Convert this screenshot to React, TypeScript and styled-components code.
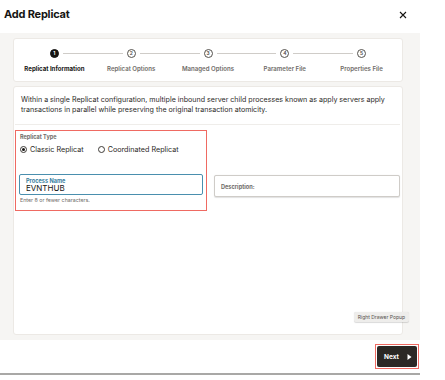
import React from 'react'
import styled, { createGlobalStyle } from 'styled-components'

const GlobalStyle = createGlobalStyle`
  html, body {
    margin: 0;
    padding: 0;
    background: #ffffff;
    font-family: Inter, "Noto Sans", sans-serif;
    color: #161513;
  }
`

const steps = [
  'Replicat Information',
  'Replicat Options',
  'Managed Options',
  'Parameter File',
  'Properties File',
]

export default function App() {
  return (
    <>
      <GlobalStyle />
      <Dialog>
        <Header>
          <Title>Add Replicat</Title>
          <Close aria-label="close">
            <svg width="8" height="8" viewBox="0 0 8 8">
              <path d="M1 1 L7 7 M7 1 L1 7" stroke="#161513" strokeWidth="1.1" />
            </svg>
          </Close>
        </Header>
        <Body>
          <Card>
            <Stepper>
              {steps.map((label, i) => (
                <Step key={label}>
                  <Track>
                    <Connector $hidden={i === 0} />
                    <Dot $active={i === 0}>{i + 1}</Dot>
                    <Connector $hidden={i === steps.length - 1} />
                  </Track>
                  <StepLabel $active={i === 0}>{label}</StepLabel>
                </Step>
              ))}
            </Stepper>
          </Card>
          <MainCard>
            <Intro>
              Within a single Replicat configuration, multiple inbound server child processes known as apply servers apply
              transactions in parallel while preserving the original transaction atomicity.
            </Intro>
            <Divider />
            <FormRow>
              <Highlight>
                <GroupLabel>Replicat Type</GroupLabel>
                <Radios>
                  <RadioOption>
                    <Radio $checked />
                    Classic Replicat
                  </RadioOption>
                  <RadioOption>
                    <Radio />
                    Coordinated Replicat
                  </RadioOption>
                </Radios>
                <Field $focused>
                  <FieldLabel $focused>Process Name</FieldLabel>
                  <FieldValue>EVNTHUB</FieldValue>
                </Field>
                <Hint>Enter 8 or fewer characters.</Hint>
              </Highlight>
              <SideField>
                <FieldLabel>Description:</FieldLabel>
              </SideField>
            </FormRow>
            <Tooltip>Right Drawer Popup</Tooltip>
          </MainCard>
        </Body>
        <Footer>
          <NextWrap>
            <NextButton>
              Next
              <svg width="5" height="6" viewBox="0 0 5 6">
                <path d="M0.5 0 L4.5 3 L0.5 6 Z" fill="#ffffff" />
              </svg>
            </NextButton>
          </NextWrap>
        </Footer>
      </Dialog>
    </>
  )
}

const Dialog = styled.div`
  width: 420px;
  height: 375px;
  display: flex;
  flex-direction: column;
  border-bottom: 2px solid #a9a8a6;
  box-sizing: border-box;
`

const Header = styled.div`
  height: 33px;
  display: flex;
  align-items: center;
  justify-content: space-between;
  padding: 0 12px 0 4px;
  box-sizing: border-box;
`

const Title = styled.h1`
  margin: 0;
  font-size: 11px;
  font-weight: 700;
  letter-spacing: -0.2px;
  margin-top: -6px;
`

const Close = styled.div`
  width: 10px;
  height: 10px;
  display: flex;
  align-items: center;
  justify-content: center;
  margin-top: -4px;
`

const Body = styled.div`
  background: #f6f5f3;
  padding: 5px 17px 5px 13px;
  display: flex;
  flex-direction: column;
  gap: 4px;
`

const Card = styled.div`
  background: #ffffff;
  border: 1px solid #ece9e5;
  border-radius: 3px;
  box-sizing: border-box;
`

const Stepper = styled.div`
  height: 42px;
  display: grid;
  grid-template-columns: repeat(5, 1fr);
  padding: 0 2px;
  align-content: center;
`

const Step = styled.div`
  display: flex;
  flex-direction: column;
  align-items: center;
  gap: 7px;
`

const Track = styled.div`
  width: 100%;
  display: flex;
  align-items: center;
  gap: 4px;
`

const Connector = styled.div<{ $hidden?: boolean }>`
  flex: 1;
  height: 1px;
  background: ${(p) => (p.$hidden ? 'transparent' : '#cfccc8')};
`

const Dot = styled.div<{ $active?: boolean }>`
  width: 9px;
  height: 9px;
  border-radius: 50%;
  box-sizing: border-box;
  border: 0.8px solid ${(p) => (p.$active ? '#161513' : '#55524e')};
  background: ${(p) => (p.$active ? '#161513' : '#ffffff')};
  color: ${(p) => (p.$active ? '#ffffff' : '#55524e')};
  font-size: 4.8px;
  font-weight: 700;
  display: flex;
  align-items: center;
  justify-content: center;
  line-height: 1;
`

const StepLabel = styled.div<{ $active?: boolean }>`
  font-size: 6.1px;
  font-weight: ${(p) => (p.$active ? 700 : 600)};
  color: ${(p) => (p.$active ? '#161513' : '#6f6c68')};
  white-space: nowrap;
`

const MainCard = styled(Card)`
  height: 249px;
  position: relative;
`

const Intro = styled.p`
  margin: 0;
  padding: 8px 8px 0 7px;
  font-size: 7.1px;
  line-height: 10px;
  color: #2b2926;
`

const Divider = styled.div`
  height: 1px;
  background: #efedea;
  margin: 9px 2px 0 1px;
`

const FormRow = styled.div`
  display: flex;
  align-items: flex-start;
  gap: 7px;
  padding: 5px 2px 0 1px;
`

const Highlight = styled.div`
  width: 192px;
  height: 81px;
  box-sizing: border-box;
  border: 1.5px solid #ef6a62;
  padding: 3px 3px 0 3px;
  display: flex;
  flex-direction: column;
`

const GroupLabel = styled.div`
  font-size: 5.5px;
  font-weight: 700;
  color: #6f6c68;
  padding-left: 1px;
`

const Radios = styled.div`
  display: flex;
  gap: 14px;
  margin-top: 5px;
  padding-left: 1px;
`

const RadioOption = styled.label`
  display: flex;
  align-items: center;
  gap: 3px;
  font-size: 7.2px;
  color: #2b2926;
`

const Radio = styled.span<{ $checked?: boolean }>`
  width: 7px;
  height: 7px;
  border-radius: 50%;
  border: 0.8px solid #3d3a36;
  box-sizing: border-box;
  display: flex;
  align-items: center;
  justify-content: center;
  &::after {
    content: '';
    width: 3.5px;
    height: 3.5px;
    border-radius: 50%;
    background: ${(p) => (p.$checked ? '#161513' : 'transparent')};
  }
`

const Field = styled.div<{ $focused?: boolean }>`
  height: 21px;
  box-sizing: border-box;
  border: ${(p) => (p.$focused ? '1.3px solid #4a8fae' : '1px solid #cfccc8')};
  border-radius: 2px;
  padding: 2px 6px 0 6px;
  display: flex;
  flex-direction: column;
  justify-content: center;
  margin-top: 20px;
  background: #ffffff;
`

const SideField = styled(Field)`
  flex: 1;
  margin-top: 45px;
  height: 22px;
  box-shadow: 0 0.5px 1px rgba(0, 0, 0, 0.12);
`

const FieldLabel = styled.div<{ $focused?: boolean }>`
  font-size: 5.6px;
  font-weight: 700;
  color: ${(p) => (p.$focused ? '#3a7fa0' : '#6f6c68')};
`

const FieldValue = styled.div`
  font-size: 8px;
  color: #161513;
  line-height: 9px;
`

const Hint = styled.div`
  font-size: 5.3px;
  color: #6f6c68;
  margin-top: 2px;
  padding-left: 1px;
`

const Tooltip = styled.div`
  position: absolute;
  right: -7px;
  top: 225px;
  padding: 2px 4px;
  font-size: 5px;
  color: #55524e;
  background: #eeedeb;
  border-radius: 2px;
  box-shadow: 0 0.5px 1px rgba(0, 0, 0, 0.15);
`

const Footer = styled.div`
  flex: 1;
  display: flex;
  justify-content: flex-end;
  align-items: flex-start;
  padding: 4px 1px 0 0;
`

const NextWrap = styled.div`
  border: 1.5px solid #ef6a62;
  padding: 1px;
  background: #ffffff;
`

const NextButton = styled.button`
  all: unset;
  width: 40px;
  height: 21px;
  box-sizing: border-box;
  background: #2b2825;
  color: #ffffff;
  font-family: Inter, sans-serif;
  font-size: 6.5px;
  font-weight: 700;
  display: flex;
  align-items: center;
  justify-content: center;
  gap: 8px;
  border-radius: 2px;
  padding-left: 2px;
`
